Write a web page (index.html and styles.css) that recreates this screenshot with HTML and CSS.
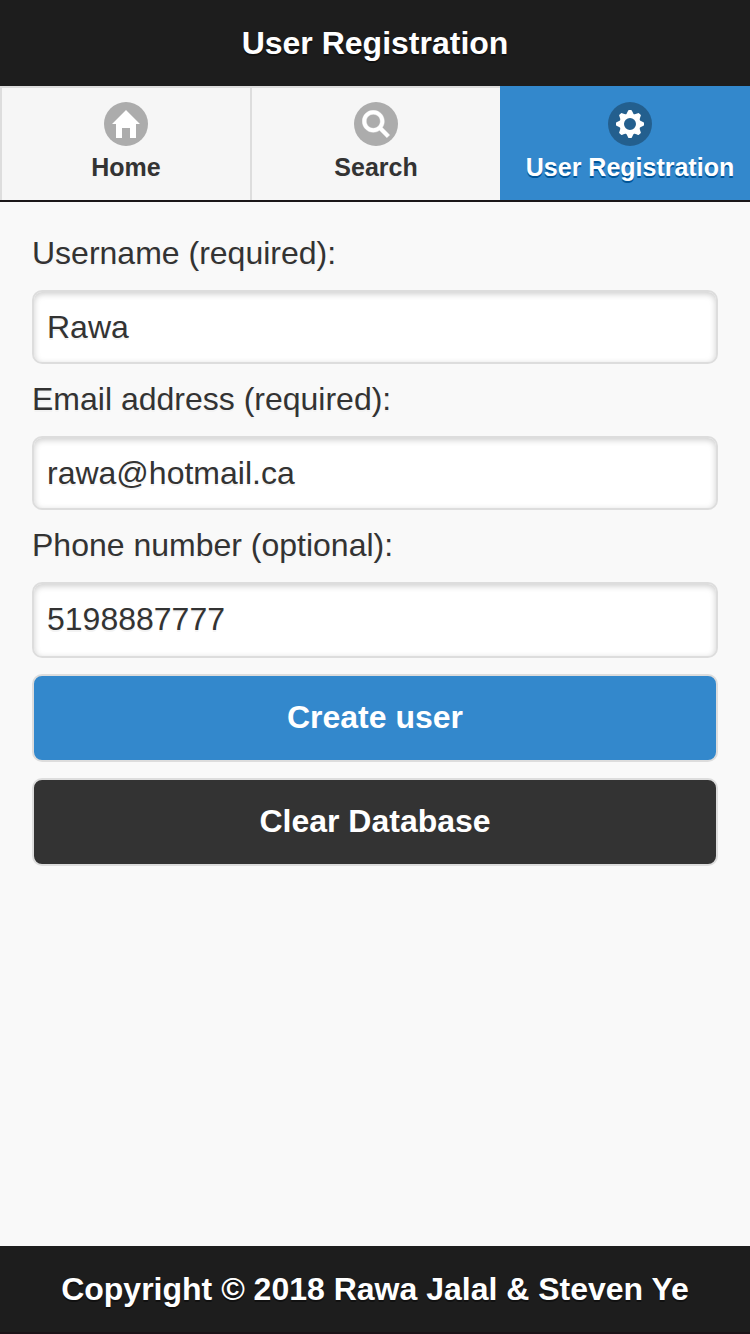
FILE: index.html
```html
<!DOCTYPE html>
<html lang="en">
<head>
<meta charset="utf-8">
<title>User Registration</title>
<link rel="stylesheet" href="styles.css">
</head>
<body>
<header class="bar header"><h1>User Registration</h1></header>
<nav class="tabs">
  <a class="tab">
    <span class="disc"><svg width="28" height="28" viewBox="0 0 14 14"><path d="M7 0 0 7h2v7h3V9h4v5h3V7h2z"/></svg></span>
    <span>Home</span>
  </a>
  <a class="tab">
    <span class="disc"><svg class="lens" width="28" height="28" viewBox="0 0 14 14"><path d="M10.171,8.766c0.617-0.888,0.979-1.964,0.979-3.126c0-3.037-2.463-5.5-5.5-5.5s-5.5,2.463-5.5,5.5s2.463,5.5,5.5,5.5c1.152,0,2.223-0.355,3.104-0.962l3.684,3.683l1.414-1.414L10.171,8.766z M5.649,9.14c-1.933,0-3.5-1.567-3.5-3.5c0-1.933,1.567-3.5,3.5-3.5c1.933,0,3.5,1.567,3.5,3.5C9.149,7.572,7.582,9.14,5.649,9.14z"/></svg></span>
    <span>Search</span>
  </a>
  <a class="tab active">
    <span class="disc"><svg width="28" height="28" viewBox="-14 -14 28 28">
      <defs><path id="tooth" d="M-3.8-9.5-2.3-12.4Q-2-14-1-14H1Q2-14 2.3-12.4L3.8-9.5z"/></defs>
      <circle class="ring" r="8.3"/>
      <use href="#tooth"/><use href="#tooth" transform="rotate(45)"/><use href="#tooth" transform="rotate(90)"/><use href="#tooth" transform="rotate(135)"/><use href="#tooth" transform="rotate(180)"/><use href="#tooth" transform="rotate(225)"/><use href="#tooth" transform="rotate(270)"/><use href="#tooth" transform="rotate(315)"/>
    </svg></span>
    <span>User Registration</span>
  </a>
</nav>
<main class="content">
  <label class="label" for="user">Username (required):</label>
  <input class="field" id="user" type="text" value="Rawa">
  <label class="label" for="email">Email address (required):</label>
  <input class="field" id="email" type="text" value="rawa@hotmail.ca">
  <label class="label" for="phone">Phone number (optional):</label>
  <input class="field tall" id="phone" type="text" value="5198887777">
  <button class="button primary">Create user</button>
  <button class="button dark">Clear Database</button>
</main>
<footer class="bar footer"><h2>Copyright © 2018 Rawa Jalal &amp; Steven Ye</h2></footer>
</body>
</html>
```
FILE: styles.css
```css
* { box-sizing: border-box; }
body {
  margin: 0;
  height: 1334px;
  display: flex;
  flex-direction: column;
  overflow: hidden;
  background: #f9f9f9;
  color: #333;
  font: 32px/42px "Liberation Sans", Arial, sans-serif;
}
.bar {
  flex: none;
  background: #1d1d1d;
  color: #fff;
  text-align: center;
  text-shadow: 0 2px 0 #111;
}
.bar h1, .bar h2 { margin: 0; font-size: 32px; line-height: 42px; }
.header { height: 86px; padding-top: 22px; }
.footer { height: 88px; padding-top: 22px; border-bottom: 2px solid #1b1217; }
.tabs {
  flex: none;
  display: grid;
  grid-template-columns: repeat(3, 250px);
  height: 116px;
  border-bottom: 2px solid #1b1719;
}
.tab {
  display: flex;
  flex-direction: column;
  align-items: center;
  gap: 5px;
  padding-top: 14px;
  border: solid #ddd;
  border-width: 2px 0 0 2px;
  background: #f6f6f6;
  font-size: 25px;
  font-weight: bold;
  line-height: 32px;
  white-space: nowrap;
  text-shadow: 0 2px 0 #f3f3f3;
}
.tab.active {
  padding-left: 8px;
  border-color: #38c;
  background: #38c;
  color: #fff;
  text-shadow: 0 2px 0 #059;
}
.disc {
  display: grid;
  place-items: center;
  width: 44px;
  height: 44px;
  border-radius: 50%;
  background: rgba(0, 0, 0, .3);
}
.disc svg { display: block; fill: #fff; }
.disc .lens { stroke: #fff; stroke-width: .2; }
.disc .ring { fill: none; stroke: #fff; stroke-width: 4.6; }
.content {
  flex: 1;
  display: flex;
  flex-direction: column;
  padding: 30px 32px 0;
  text-shadow: 0 2px 0 #f3f3f3;
}
.label { height: 58px; }
.field {
  height: 74px;
  margin: 0 0 14px;
  padding: 0 13px;
  border: 2px solid #ddd;
  border-radius: 10px;
  background: #fff;
  box-shadow: inset 0 2px 6px rgba(0, 0, 0, .2);
  color: #333;
  font: inherit;
  text-shadow: 0 2px 0 #f3f3f3;
}
.field.tall { height: 76px; margin-bottom: 16px; padding-bottom: 2px; }
.button {
  height: 88px;
  margin: 0 0 16px;
  padding: 0 0 2px;
  border: 2px solid #ddd;
  border-radius: 10px;
  color: #fff;
  font: bold 32px/42px "Liberation Sans", Arial, sans-serif;
  text-shadow: none;
}
.primary { background: #38c; }
.dark { background: #333; }
```
